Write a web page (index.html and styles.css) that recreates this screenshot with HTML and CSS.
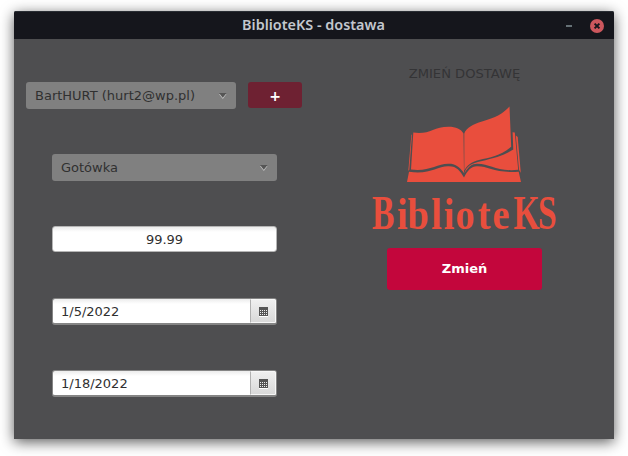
FILE: index.html
```html
<!DOCTYPE html>
<html lang="pl">
<head>
<meta charset="utf-8">
<title>BiblioteKS - dostawa</title>
<link rel="stylesheet" href="styles.css">
</head>
<body>
<main class="window">
  <header class="titlebar">
    <h1 class="title">BiblioteKS - dostawa</h1>
    <div class="controls">
      <span class="minimize"></span>
      <span class="close"><svg width="14" height="14" viewBox="0 0 14 14"><path d="M4.6 4.6l4.8 4.8M9.4 4.6l-4.8 4.8"/></svg></span>
    </div>
  </header>
  <div class="content">
    <form class="form">
      <div class="row">
        <div class="combo supplier"><span>BartHURT (hurt2@wp.pl)</span><svg class="arrow" width="8" height="6" viewBox="0 0 8 6"><path class="arrow-light" d="M0 1h7.5L3.8 6z"/><path d="M0 0h7.5L3.8 4.8z"/></svg></div>
        <button class="add" type="button">+</button>
      </div>
      <div class="row">
        <div class="combo payment"><span>Gotówka</span><svg class="arrow" width="8" height="6" viewBox="0 0 8 6"><path class="arrow-light" d="M0 1h7.5L3.8 6z"/><path d="M0 0h7.5L3.8 4.8z"/></svg></div>
      </div>
      <div class="row">
        <div class="field price">99.99</div>
      </div>
      <div class="row">
        <div class="field date"><span class="value">1/5/2022</span><span class="picker"><svg width="9" height="10" viewBox="0 0 9 10"><path class="glow" d="M0 1h9v9H0z"/><path class="sheet" d="M0 0h9v9H0z"/><path class="days" d="M1 3.5h7M1 5.5h7M1 7.5h7"/></svg></span></div>
      </div>
      <div class="row">
        <div class="field date"><span class="value">1/18/2022</span><span class="picker"><svg width="9" height="10" viewBox="0 0 9 10"><path class="glow" d="M0 1h9v9H0z"/><path class="sheet" d="M0 0h9v9H0z"/><path class="days" d="M1 3.5h7M1 5.5h7M1 7.5h7"/></svg></span></div>
      </div>
    </form>
    <section class="side">
      <h2 class="heading">ZMIEŃ DOSTAWĘ</h2>
      <svg class="logo" width="190" height="132" viewBox="370 103 190 132">
        <path d="M413.3 132.6C429 135 433 127 448.5 126.7C456 126.7 461 129 463.5 133.5L464 173C459 166 455 163.5 448 163.7C437 164 428 172 411 169.5Z"/>
        <path d="M412 134L409.3 169.5L408.3 171L411.3 135.5Z"/>
        <path d="M409 171.7C429 175 437 166.5 448 166.3C457 166 460 171 464 177.5C468 170 471 166.5 477 166.3C488 166 495 173.5 518.7 171.7L521 182H407Z"/>
        <path d="M464.3 133.5C466 128 473 124 482 121.5C495 118 504 113 509.5 106.5L511.2 146.8C501 156 490 157.5 479 160C471 162 467.5 165 464.3 170.5Z"/>
        <path d="M512.6 132.3L514.8 132.5L518.2 169.8C496 172 490 163.5 477 163.8C472 164 468 166.5 464.2 173.8C466 166 472 163 481 161.2C495 158 505 155 513.3 149.5Z"/>
        <path d="M515.8 135.5L517.7 137L520.8 173L519 169.5Z"/>
        <text class="capital" transform="translate(372 228.5) scale(.7 1)">B</text>
        <text class="small" transform="translate(0 228.5) scale(.85 1)" x="467 479.5 507.5 522 536 562 579.5">ibliote</text>
        <text class="capital" transform="translate(0 228.5) scale(.7 1)" x="733.5 768.6">KS</text>
      </svg>
      <button class="submit" type="button">Zmień</button>
    </section>
  </div>
</main>
</body>
</html>
```

FILE: styles.css
```css
* {
  box-sizing: border-box;
}

body {
  margin: 0;
  height: 456px;
  padding: 11px 14px 17px;
  overflow: hidden;
  background: #fff;
  color: #303030;
  font: 13px/16px "DejaVu Sans", sans-serif;
}

button {
  border: 0;
  border-radius: 3px;
  padding: 0;
  color: #fff;
  font: bold 13px/16px "DejaVu Sans", sans-serif;
}

.window {
  width: 600px;
  height: 428px;
  border-radius: 2px 2px 0 0;
  background: #4e4e50;
  box-shadow: 0 3px 14px rgba(0, 0, 0, .65);
}

.titlebar {
  display: grid;
  grid-template-columns: 60px 1fr 60px;
  align-items: center;
  height: 28px;
  border-top: 1px solid #292d33;
  border-radius: 2px 2px 0 0;
  background: #15161c;
}

.title {
  grid-column: 2;
  margin: 0 1px 2px 0;
  color: #c3c7ce;
  font: 600 14.4px/20px "Noto Sans", sans-serif;
  text-align: center;
}

.controls {
  display: flex;
  align-items: center;
  justify-content: flex-end;
  gap: 18px;
  padding-right: 10px;
}

.minimize {
  width: 6px;
  height: 2px;
  background: #667176;
}

.close {
  display: flex;
  width: 14px;
  height: 14px;
  border-radius: 50%;
  background: #cc575d;
}

.close path {
  stroke: #15161c;
  stroke-width: 2;
}

.content {
  display: grid;
  grid-template-columns: 300px 300px;
  height: 400px;
}

.form {
  padding-top: 20px;
}

.row {
  display: flex;
  align-items: flex-start;
  justify-content: center;
  gap: 12px;
  height: 72px;
  padding-top: 23px;
}

.row:not(:first-child) {
  padding-left: 1px;
}

.combo {
  display: flex;
  align-items: center;
  justify-content: space-between;
  height: 27px;
  padding: 0 9px;
  border-radius: 3px;
  background: #808080;
}

.supplier {
  width: 210px;
}

.payment {
  width: 225px;
}

.arrow {
  margin-top: 1px;
  fill: #555;
}

.arrow-light {
  fill: #c5c5c5;
}

.add {
  width: 54px;
  height: 26px;
  padding-top: 1px;
  background: #6e2132;
  font-size: 14px;
}

.field {
  width: 225px;
  height: 26px;
  border: 1px solid #b5b5b5;
  border-radius: 3px;
  background: linear-gradient(#ececec, #fff 5px);
}

.price {
  line-height: 25px;
  text-align: center;
}

.date {
  display: flex;
  height: 27px;
  border-color: #858585;
  border-bottom-width: 2px;
}

.value {
  flex: 1;
  padding-left: 8px;
  line-height: 25px;
}

.picker {
  display: flex;
  align-items: center;
  justify-content: center;
  width: 26px;
  padding-top: 2px;
  border: 1px solid #f7f7f7;
  border-left-color: #b0b0b0;
  border-radius: 0 2px 2px 0;
  background: linear-gradient(#efefef, #d9d9d9);
}

.glow {
  fill: #fff;
}

.sheet {
  fill: #555;
}

.days {
  stroke: #eee;
  stroke-dasharray: 1 1;
}

.side {
  display: flex;
  flex-direction: column;
  align-items: center;
  padding: 26px 0 0 1px;
}

.heading {
  margin: 0;
  color: #343436;
  font-size: 13.1px;
  font-weight: normal;
  line-height: 17px;
}

.logo {
  margin: 21px 0 13px;
  overflow: visible;
  fill: #e94e3d;
}

.capital {
  font: bold 48px "Liberation Serif", serif;
}

.small {
  font: bold 45px "Liberation Serif", serif;
}

.submit {
  width: 155px;
  height: 42px;
  background: #c3063c;
}
```
